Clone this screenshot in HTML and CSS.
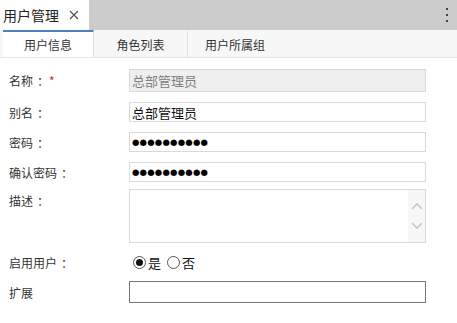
FILE: index.html
```html
<!DOCTYPE html>
<html lang="zh">
<head>
    <meta charset="UTF-8">
    <title>用户管理</title>
    <link rel="stylesheet" href="styles.css">
</head>
<body>
    <div class="topbar">
        <div class="page-tab">
            <span class="page-title">用户管理</span>
            <svg class="close" width="10" height="10" viewBox="0 0 10 10">
                <path d="M1 1L9 9M9 1L1 9" stroke="#555" stroke-width="1.2" fill="none"/>
            </svg>
        </div>
        <div class="more">
            <span></span><span></span><span></span>
        </div>
    </div>
    <div class="tabs">
        <div class="tab active">用户信息</div>
        <div class="tab">角色列表</div>
        <div class="tab">用户所属组</div>
    </div>
    <div class="form">
        <div class="row r1">
            <div class="label">名称<span class="colon">：</span><span class="req">*</span></div>
            <div class="field disabled">总部管理员</div>
        </div>
        <div class="row r2">
            <div class="label">别名<span class="colon">：</span></div>
            <div class="field">总部管理员</div>
        </div>
        <div class="row r3">
            <div class="label">密码<span class="colon">：</span></div>
            <div class="field"><span class="dots">●●●●●●●●●●</span></div>
        </div>
        <div class="row r4">
            <div class="label">确认密码<span class="colon">：</span></div>
            <div class="field"><span class="dots">●●●●●●●●●●</span></div>
        </div>
        <div class="row r5">
            <div class="label">描述<span class="colon">：</span></div>
            <div class="textarea">
                <div class="scroll">
                    <svg width="12" height="8" viewBox="0 0 12 8"><path d="M1 7L6 2L11 7" stroke="#c8c8c8" stroke-width="1.6" fill="none"/></svg>
                    <svg width="12" height="8" viewBox="0 0 12 8"><path d="M1 1L6 6L11 1" stroke="#c8c8c8" stroke-width="1.6" fill="none"/></svg>
                </div>
            </div>
        </div>
        <div class="row r6">
            <div class="label">启用用户<span class="colon">：</span></div>
            <div class="radios">
                <span class="radio checked"></span><span class="radio-text">是</span>
                <span class="radio"></span><span class="radio-text">否</span>
            </div>
        </div>
        <div class="row r7">
            <div class="label">扩展</div>
            <div class="field dark"></div>
        </div>
    </div>
</body>
</html>
```

FILE: styles.css
```css
body {
    margin: 0;
    font-family: "Noto Sans CJK SC", "Noto Sans", sans-serif;
    color: #333;
    background: #fff;
}
.topbar {
    display: flex;
    align-items: center;
    justify-content: space-between;
    height: 30px;
    background: #cccccc;
}
.page-tab {
    display: flex;
    align-items: center;
    height: 30px;
    width: 89px;
    box-sizing: border-box;
    padding-left: 3px;
    background: #fff;
}
.page-title {
    font-size: 14px;
    color: #222;
}
.close {
    margin-left: 10px;
}
.more {
    display: flex;
    flex-direction: column;
    gap: 4px;
    margin-right: 9px;
}
.more span {
    width: 2px;
    height: 2px;
    background: #444;
}
.tabs {
    display: flex;
    height: 27px;
    padding-left: 3px;
    background: #f7f7f7;
    border-bottom: 1px solid #e6e6e6;
}
.tab {
    width: 94px;
    box-sizing: border-box;
    display: flex;
    align-items: center;
    justify-content: center;
    font-size: 12px;
    color: #333;
    border-right: 1px solid #e2e2e2;
    border-top: 2px solid transparent;
}
.tab.active {
    width: 91px;
    background: #fff;
    border-top-color: #4a7fc0;
}
.tab:last-child {
    border-right: none;
}
.form {
    padding: 11px 0 0 9px;
}
.row {
    display: flex;
    align-items: center;
}
.label {
    width: 120px;
    font-size: 12px;
    color: #333;
}
.colon {
    padding-left: 4px;
}
.req {
    color: #e02020;
}
.field {
    width: 297px;
    height: 20px;
    box-sizing: border-box;
    border: 1px solid #d9d9d9;
    display: flex;
    align-items: center;
    padding-left: 2px;
    font-size: 13px;
    color: #111;
}
.field.disabled {
    height: 23px;
    background: #efefef;
    color: #808080;
}
.field.dark {
    height: 22px;
    border-color: #767676;
}
.dots {
    font-family: "DejaVu Sans", sans-serif;
    font-size: 8.5px;
    letter-spacing: 0.2px;
    color: #000;
}
.r2, .r3, .r4 {
    margin-top: 10px;
}
.r5 {
    margin-top: 7px;
    align-items: flex-start;
}
.r5 .label {
    padding-top: 3px;
}
.textarea {
    width: 297px;
    height: 54px;
    box-sizing: border-box;
    border: 1px solid #d9d9d9;
    display: flex;
    justify-content: flex-end;
}
.scroll {
    width: 17px;
    background: #f7f7f7;
    display: flex;
    flex-direction: column;
    align-items: center;
    justify-content: space-evenly;
}
.r6 {
    margin-top: 11px;
    height: 16px;
}
.radios {
    display: flex;
    align-items: center;
    padding-left: 4px;
    font-size: 13px;
    color: #111;
}
.radio {
    width: 13px;
    height: 13px;
    box-sizing: border-box;
    border: 1px solid #555;
    border-radius: 50%;
    position: relative;
}
.radio.checked::after {
    content: "";
    position: absolute;
    left: 2px;
    top: 2px;
    width: 7px;
    height: 7px;
    border-radius: 50%;
    background: #111;
}
.radio-text {
    margin-left: 2px;
    margin-right: 6px;
}
.r7 {
    margin-top: 11px;
}
```
